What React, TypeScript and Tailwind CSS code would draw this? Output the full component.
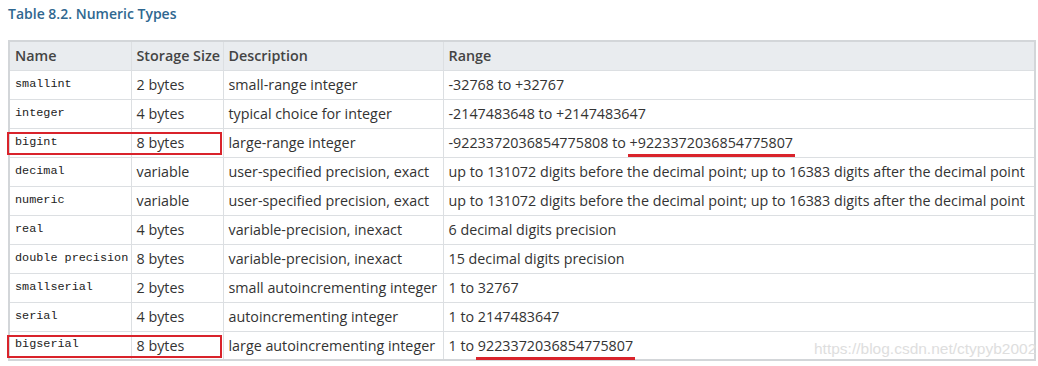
const ROWS = [
  { name: "smallint", size: "2 bytes", desc: "small-range integer", range: "-32768 to +32767" },
  { name: "integer", size: "4 bytes", desc: "typical choice for integer", range: "-2147483648 to +2147483647" },
  { name: "bigint", size: "8 bytes", desc: "large-range integer", range: "-9223372036854775808 to ", mark: "+9223372036854775807", boxed: true },
  { name: "decimal", size: "variable", desc: "user-specified precision, exact", range: "up to 131072 digits before the decimal point; up to 16383 digits after the decimal point" },
  { name: "numeric", size: "variable", desc: "user-specified precision, exact", range: "up to 131072 digits before the decimal point; up to 16383 digits after the decimal point" },
  { name: "real", size: "4 bytes", desc: "variable-precision, inexact", range: "6 decimal digits precision" },
  { name: "double precision", size: "8 bytes", desc: "variable-precision, inexact", range: "15 decimal digits precision" },
  { name: "smallserial", size: "2 bytes", desc: "small autoincrementing integer", range: "1 to 32767" },
  { name: "serial", size: "4 bytes", desc: "autoincrementing integer", range: "1 to 2147483647" },
  { name: "bigserial", size: "8 bytes", desc: "large autoincrementing integer", range: "1 to ", mark: "9223372036854775807", boxed: true },
];

const cell = "border border-[#dcdfe2] px-[5px] h-[29px] align-middle whitespace-nowrap";

export default function App() {
  return (
    <div className="relative h-[366px] w-[1038px] overflow-hidden bg-white font-['Open_Sans','Noto_Sans',sans-serif] text-[14.3px] text-[#333]">
      <div className="pl-[8px] pt-[3px] text-[14px] font-semibold leading-[22px] text-[#2f6790]">
        Table 8.2. Numeric Types
      </div>

      <table className="ml-[8px] mt-[15px] w-[1028px] table-fixed border-collapse border-2 border-[#d3d6d9]">
        <colgroup>
          <col className="w-[122px]" />
          <col className="w-[92px]" />
          <col className="w-[220px]" />
          <col />
        </colgroup>
        <thead>
          <tr className="bg-[#e9ecef] text-[#444]">
            <th className={`${cell} text-left font-semibold`}>Name</th>
            <th className={`${cell} text-left font-semibold`}>Storage Size</th>
            <th className={`${cell} text-left font-semibold`}>Description</th>
            <th className={`${cell} text-left font-semibold`}>Range</th>
          </tr>
        </thead>
        <tbody>
          {ROWS.map((r) => (
            <tr key={r.name}>
              <td className={`${cell} relative font-['Liberation_Mono','DejaVu_Sans_Mono',monospace] text-[11.8px] text-[#222]`}>
                {r.name}
                {r.boxed ? (
                  <span className="pointer-events-none absolute left-[-3px] top-[3px] h-[23px] w-[215px] border-2 border-[#d9232b]" />
                ) : null}
              </td>
              <td className={cell}>{r.size}</td>
              <td className={cell}>{r.desc}</td>
              <td className={cell}>
                {r.range}
                {r.mark ? (
                  <span className="relative">
                    {r.mark}
                    <span className="absolute bottom-[-5px] left-[-2px] right-[-2px] h-[3px] bg-[#d9232b]" />
                  </span>
                ) : null}
              </td>
            </tr>
          ))}
        </tbody>
      </table>

      <div className="pointer-events-none absolute left-[814px] top-[337px] whitespace-nowrap font-['Liberation_Sans',sans-serif] text-[15.5px] text-[#dedede]">
        https://blog.csdn.net/ctypyb2002
      </div>
    </div>
  );
}
